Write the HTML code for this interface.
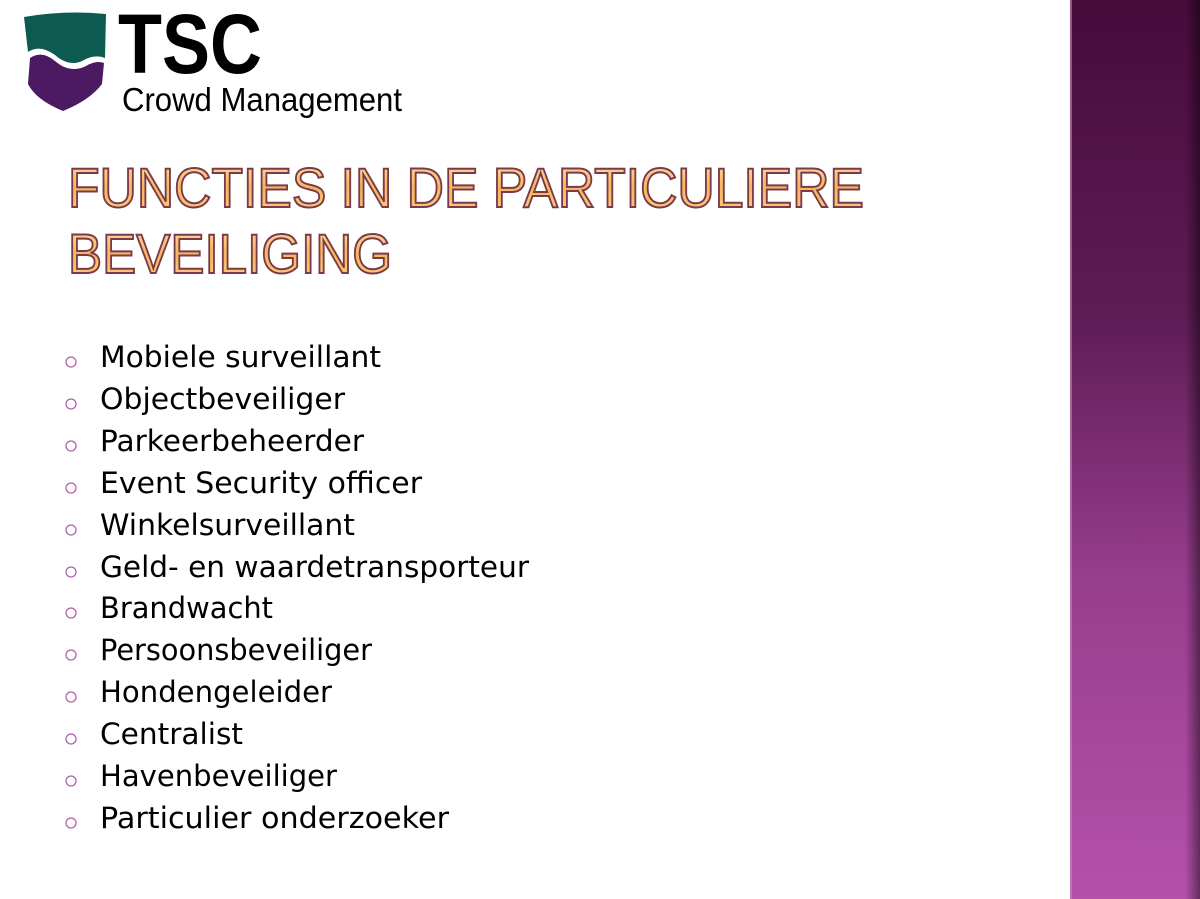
<!DOCTYPE html>
<html><head><meta charset="utf-8"><style>
html,body{margin:0;padding:0;background:#fff;width:1200px;height:899px;overflow:hidden}
svg{display:block}
</style></head><body>
<svg width="1200" height="899" viewBox="0 0 1200 899" xmlns="http://www.w3.org/2000/svg">
<defs>
<linearGradient id="pan" x1="0" y1="0" x2="0" y2="1">
<stop offset="0" stop-color="#480b3c"/>
<stop offset="0.35" stop-color="#5e1c55"/>
<stop offset="0.65" stop-color="#983e8e"/>
<stop offset="1" stop-color="#b550ab"/>
</linearGradient>
<linearGradient id="edge" x1="0" y1="0" x2="1" y2="0">
<stop offset="0" stop-color="#000" stop-opacity="0"/>
<stop offset="1" stop-color="#000" stop-opacity="0.45"/>
</linearGradient>
<linearGradient id="gold" x1="0" y1="0" x2="0" y2="1">
<stop offset="0" stop-color="#fde2b0"/>
<stop offset="0.5" stop-color="#f8b55e"/>
<stop offset="1" stop-color="#fbcf86"/>
</linearGradient>
</defs>
<rect x="1070" y="0" width="130" height="899" fill="url(#pan)"/>
<rect x="1070" y="0" width="2" height="899" fill="#c58bbd" opacity="0.6"/>
<rect x="1185" y="0" width="15" height="899" fill="url(#edge)"/>
<!-- shield -->
<path d="M24 17 Q65 10 106 14 L105 58 Q95 54 84 60 Q70 68 55 55 Q40 44 28 52 Z" fill="#0c5a50"/>
<path d="M30 58 Q42 50 55 61 Q70 74 86 66 Q96 60 104 63 L102 84 Q90 100 63 111 Q36 100 28 84 Z" fill="#4c1a63"/>
<text x="118" y="73" font-family="Liberation Sans, sans-serif" font-weight="bold" font-size="84" textLength="144" lengthAdjust="spacingAndGlyphs" fill="#000">TSC</text>
<text x="122" y="111" font-family="Liberation Sans, sans-serif" font-size="33" textLength="280" lengthAdjust="spacingAndGlyphs" fill="#000">Crowd Management</text>
<!-- title -->
<g font-family="Liberation Sans, sans-serif" font-size="56" fill="url(#gold)" stroke="#7a3a4a" stroke-width="2">
<text x="68" y="207" textLength="796" lengthAdjust="spacingAndGlyphs">FUNCTIES IN DE PARTICULIERE</text>
<text x="68" y="273" textLength="324" lengthAdjust="spacingAndGlyphs">BEVEILIGING</text>
</g>
<!-- bullets -->
<g fill="none" stroke="#b060b0" stroke-width="1.3">
<circle cx="71" cy="362" r="5"/><circle cx="71" cy="404" r="5"/><circle cx="71" cy="446" r="5"/><circle cx="71" cy="488" r="5"/><circle cx="71" cy="530" r="5"/><circle cx="71" cy="572" r="5"/><circle cx="71" cy="613" r="5"/><circle cx="71" cy="655" r="5"/><circle cx="71" cy="697" r="5"/><circle cx="71" cy="739" r="5"/><circle cx="71" cy="781" r="5"/><circle cx="71" cy="823" r="5"/>
</g>
<g font-family="DejaVu Sans, sans-serif" font-size="29" fill="#000">
<text x="100" y="367" textLength="281" lengthAdjust="spacingAndGlyphs">Mobiele surveillant</text>
<text x="100" y="409" textLength="245" lengthAdjust="spacingAndGlyphs">Objectbeveiliger</text>
<text x="100" y="451" textLength="264" lengthAdjust="spacingAndGlyphs">Parkeerbeheerder</text>
<text x="100" y="493" textLength="322" lengthAdjust="spacingAndGlyphs">Event Security officer</text>
<text x="100" y="535" textLength="255" lengthAdjust="spacingAndGlyphs">Winkelsurveillant</text>
<text x="100" y="577" textLength="429" lengthAdjust="spacingAndGlyphs">Geld- en waardetransporteur</text>
<text x="100" y="618" textLength="173" lengthAdjust="spacingAndGlyphs">Brandwacht</text>
<text x="100" y="660" textLength="272" lengthAdjust="spacingAndGlyphs">Persoonsbeveiliger</text>
<text x="100" y="702" textLength="232" lengthAdjust="spacingAndGlyphs">Hondengeleider</text>
<text x="100" y="744" textLength="143" lengthAdjust="spacingAndGlyphs">Centralist</text>
<text x="100" y="786" textLength="237" lengthAdjust="spacingAndGlyphs">Havenbeveiliger</text>
<text x="100" y="828" textLength="349" lengthAdjust="spacingAndGlyphs">Particulier onderzoeker</text>
</g>
</svg>
</body></html>
